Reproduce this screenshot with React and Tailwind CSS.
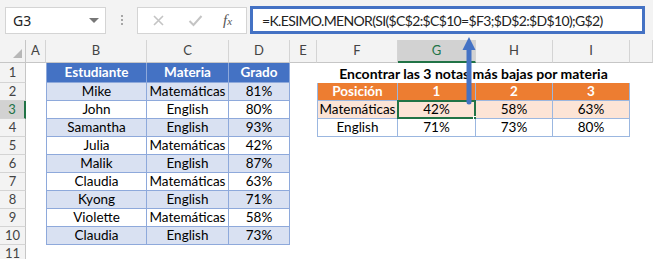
import React from 'react';

const students = [
  ['Mike', 'Matemáticas', '81%'],
  ['John', 'English', '80%'],
  ['Samantha', 'English', '93%'],
  ['Julia', 'Matemáticas', '42%'],
  ['Malik', 'English', '87%'],
  ['Claudia', 'Matemáticas', '63%'],
  ['Kyong', 'English', '71%'],
  ['Violette', 'Matemáticas', '58%'],
  ['Claudia', 'English', '73%'],
];

const lowest = [
  ['Posición', '1', '2', '3'],
  ['Matemáticas', '42%', '58%', '63%'],
  ['English', '71%', '73%', '80%'],
];

const colLetters = ['A', 'B', 'C', 'D', 'E', 'F', 'G', 'H', 'I', ''];

const Cell = ({ children, className = '' }) => (
  <div className={`flex items-center justify-center whitespace-nowrap overflow-visible ${className}`}>
    {children}
  </div>
);

const RowHead = ({ n }) => (
  <div
    className={`flex items-center justify-center text-[13px] border-b border-[#d4d4d4] ${
      n === 3
        ? 'bg-[#d2d2d2] text-[#217346] border-r-2 border-r-[#217346]'
        : 'bg-[#f3f3f3] text-[#444] border-r border-r-[#c6c6c6]'
    }`}
  >
    {n}
  </div>
);

// cells for one sheet row (columns A..J)
const sheetRow = (r) => {
  const cells = [];
  cells.push(<Cell key="a" />);

  // table 1 in B:D
  if (r === 1) {
    ['Estudiante', 'Materia', 'Grado'].forEach((t, i) =>
      cells.push(
        <Cell
          key={'h' + i}
          className={`bg-[#4472c4] text-white font-bold border-r border-b border-[#8ea9db] ${i === 0 ? 'border-l' : ''}`}
        >
          {t}
        </Cell>
      )
    );
  } else if (r <= 10) {
    const bg = r % 2 === 0 ? 'bg-[#d9e1f2]' : 'bg-white';
    students[r - 2].forEach((t, i) =>
      cells.push(
        <Cell key={'s' + i} className={`${bg} border-r border-b border-[#8ea9db] ${i === 0 ? 'border-l' : ''}`}>
          {t}
        </Cell>
      )
    );
  } else {
    cells.push(<Cell key="b" />, <Cell key="c" />, <Cell key="d" />);
  }

  cells.push(<Cell key="e" />);

  // table 2 in F:I
  if (r === 1) {
    cells.push(
      <Cell key="title" className="col-span-4 font-bold text-[14px]">
        Encontrar las 3 notas más bajas por materia
      </Cell>
    );
  } else if (r >= 2 && r <= 4) {
    const bg = r === 2 ? 'bg-[#ed7d31] text-white font-bold' : r === 3 ? 'bg-[#fce4d6]' : 'bg-white';
    lowest[r - 2].forEach((t, i) =>
      cells.push(
        <Cell
          key={'l' + i}
          className={`relative ${bg} border-r border-b border-[#9bb7e0] ${i === 0 ? 'border-l' : ''}`}
        >
          {t}
          {r === 3 && i === 1 && (
            <>
              <div className="absolute -left-px -top-px right-[-1px] bottom-[-1px] border-2 border-[#217346]" />
              <div className="absolute right-[-4px] bottom-[-4px] w-[6px] h-[6px] bg-[#217346] border border-white" />
            </>
          )}
        </Cell>
      )
    );
  } else {
    cells.push(<Cell key="f" />, <Cell key="g" />, <Cell key="h" />, <Cell key="i" />);
  }

  cells.push(<Cell key="j" />);
  return cells;
};

const App = () => {
  const rows = [1, 2, 3, 4, 5, 6, 7, 8, 9, 10, 11];

  return (
    <div className="relative w-[653px] h-[259px] overflow-hidden bg-white font-['Lato',sans-serif] text-[13.5px] text-black">
      {/* formula bar */}
      <div className="h-[40px] bg-[#f3f3f3] flex items-center pl-[5px] gap-0">
        <div className="w-[101px] h-[27px] bg-white border border-[#d4d4d4] flex items-center justify-between pl-[7px] pr-[6px]">
          <span className="font-['Noto_Sans',sans-serif] text-[14px] text-[#222]">G3</span>
          <span className="w-0 h-0 border-l-[5px] border-r-[5px] border-t-[5px] border-l-transparent border-r-transparent border-t-[#777]" />
        </div>
        <div className="w-[31px] flex flex-col items-center gap-[2px]">
          <span className="w-[2px] h-[2px] bg-[#a6a6a6]" />
          <span className="w-[2px] h-[2px] bg-[#a6a6a6]" />
          <span className="w-[2px] h-[2px] bg-[#a6a6a6]" />
        </div>
        <div className="w-[110px] h-[27px] bg-white border border-[#d4d4d4] flex items-center pl-[14px]">
          <svg width="13" height="13" viewBox="0 0 13 13" className="mr-[23px]">
            <path d="M2 2L11 11M11 2L2 11" stroke="#c4c4c4" strokeWidth="1.6" />
          </svg>
          <svg width="15" height="13" viewBox="0 0 15 13" className="mr-[20px]">
            <path d="M1.5 7L5.5 11L13.5 2" stroke="#c4c4c4" strokeWidth="2" fill="none" />
          </svg>
          <span className="font-['Liberation_Serif',serif] italic text-[15px] text-[#555]">
            f<span className="text-[11px]">x</span>
          </span>
        </div>
        <div className="ml-[3px] w-[395px] h-[28px] bg-white border-[3px] border-[#4472c4] flex items-center pl-[9px]">
          <span className="font-['Lato',sans-serif] text-[14px] tracking-[-0.65px] text-[#222] whitespace-nowrap">
            =K.ESIMO.MENOR(SI($C$2:$C$10=$F3;$D$2:$D$10);G$2)
          </span>
        </div>
      </div>

      {/* sheet */}
      <div className="grid grid-cols-[26px_20px_101px_82px_61px_27px_81px_78px_77px_77px_1fr] grid-rows-[23px_20px_repeat(10,18px)]">
        {/* column headers */}
        <div className="relative bg-[#f3f3f3] border-r border-b border-[#c6c6c6]">
          <span className="absolute right-[3px] bottom-[4px] w-0 h-0 [border-bottom:9px_solid_#b7b7b7] [border-left:9px_solid_transparent]" />
        </div>
        {colLetters.map((c) => (
          <div
            key={'col' + c}
            className={`flex items-center justify-center text-[13px] border-r border-r-[#d4d4d4] ${
              c === 'G'
                ? 'bg-[#d2d2d2] text-[#217346] border-b-2 border-b-[#217346]'
                : 'bg-[#f3f3f3] text-[#444] border-b border-b-[#c6c6c6]'
            }`}
          >
            {c}
          </div>
        ))}

        {rows.map((r) => (
          <React.Fragment key={r}>
            <RowHead n={r} />
            {sheetRow(r)}
          </React.Fragment>
        ))}
      </div>

      {/* callout arrow */}
      <svg className="absolute left-[460px] top-[36px]" width="18" height="72" viewBox="0 0 18 72">
        <line x1="9" y1="12" x2="9" y2="66" stroke="#4472c4" strokeWidth="5" strokeLinecap="round" />
        <path d="M9 1L15.5 14H2.5Z" fill="#4472c4" />
      </svg>
    </div>
  );
};

export default App;
